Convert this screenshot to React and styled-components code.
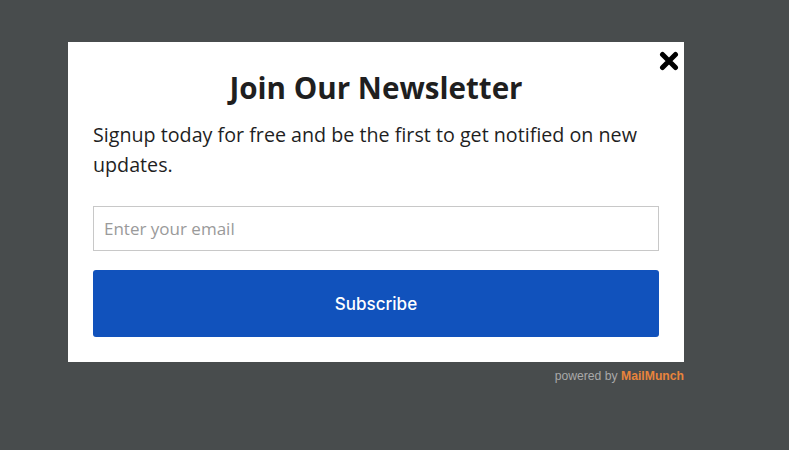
import React from 'react';
import styled, { createGlobalStyle } from 'styled-components';

const GlobalStyle = createGlobalStyle`
  html, body {
    margin: 0;
    padding: 0;
    background: #484c4d;
  }
  body {
    width: 789px;
    height: 450px;
    overflow: hidden;
  }
`;

const Page = styled.div`
  width: 789px;
  height: 450px;
  padding: 42px 0 0 68px;
  box-sizing: border-box;
`;

const Column = styled.div`
  width: 616px;
  display: flex;
  flex-direction: column;
`;

const Modal = styled.div`
  position: relative;
  background: #ffffff;
  height: 320px;
  box-sizing: border-box;
  padding: 22px 25px 0 25px;
  font-family: 'Open Sans', sans-serif;
`;

const Close = styled.button`
  position: absolute;
  top: 7px;
  right: 3px;
  border: none;
  background: none;
  padding: 0;
  width: 24px;
  height: 24px;
  display: flex;
  align-items: center;
  justify-content: center;
  cursor: pointer;
`;

const Title = styled.h1`
  margin: 0;
  text-align: center;
  font-size: 29.6px;
  line-height: 48px;
  font-weight: 700;
  color: #1f1f1f;
`;

const Text = styled.p`
  margin: 8px 0 0 0;
  font-size: 19.7px;
  line-height: 30px;
  color: #1f1f1f;
`;

const Email = styled.input`
  display: block;
  margin-top: 26px;
  width: 100%;
  height: 45px;
  box-sizing: border-box;
  border: 1px solid #c8c8c8;
  padding: 0 10px;
  font-family: 'Open Sans', sans-serif;
  font-size: 17px;
  color: #333;
  outline: none;
  &::placeholder {
    color: #9a9a9a;
  }
`;

const Subscribe = styled.button`
  margin-top: 19px;
  width: 100%;
  height: 67px;
  border: none;
  border-radius: 3px;
  background: #1152bc;
  color: #ffffff;
  font-family: 'Inter', 'Roboto', sans-serif;
  font-size: 17px;
  font-weight: 500;
  cursor: pointer;
`;

const Powered = styled.div`
  align-self: flex-end;
  margin-top: 7px;
  font-family: 'Liberation Sans', Arial, sans-serif;
  font-size: 12.2px;
  color: #a9a9a9;
  b {
    color: #e8843c;
    font-weight: 700;
  }
`;

export default function App() {
  return (
    <>
      <GlobalStyle />
      <Page>
        <Column>
          <Modal>
            <Close aria-label="Close">
              <svg width="20" height="20" viewBox="0 0 20 20">
                <path d="M3.5 3.5 L16.5 16.5 M16.5 3.5 L3.5 16.5" stroke="#000" strokeWidth="5" strokeLinecap="round" />
              </svg>
            </Close>
            <Title>Join Our Newsletter</Title>
            <Text>Signup today for free and be the first to get notified on new updates.</Text>
            <Email type="email" placeholder="Enter your email" />
            <Subscribe>Subscribe</Subscribe>
          </Modal>
          <Powered>powered by <b>MailMunch</b></Powered>
        </Column>
      </Page>
    </>
  );
}
